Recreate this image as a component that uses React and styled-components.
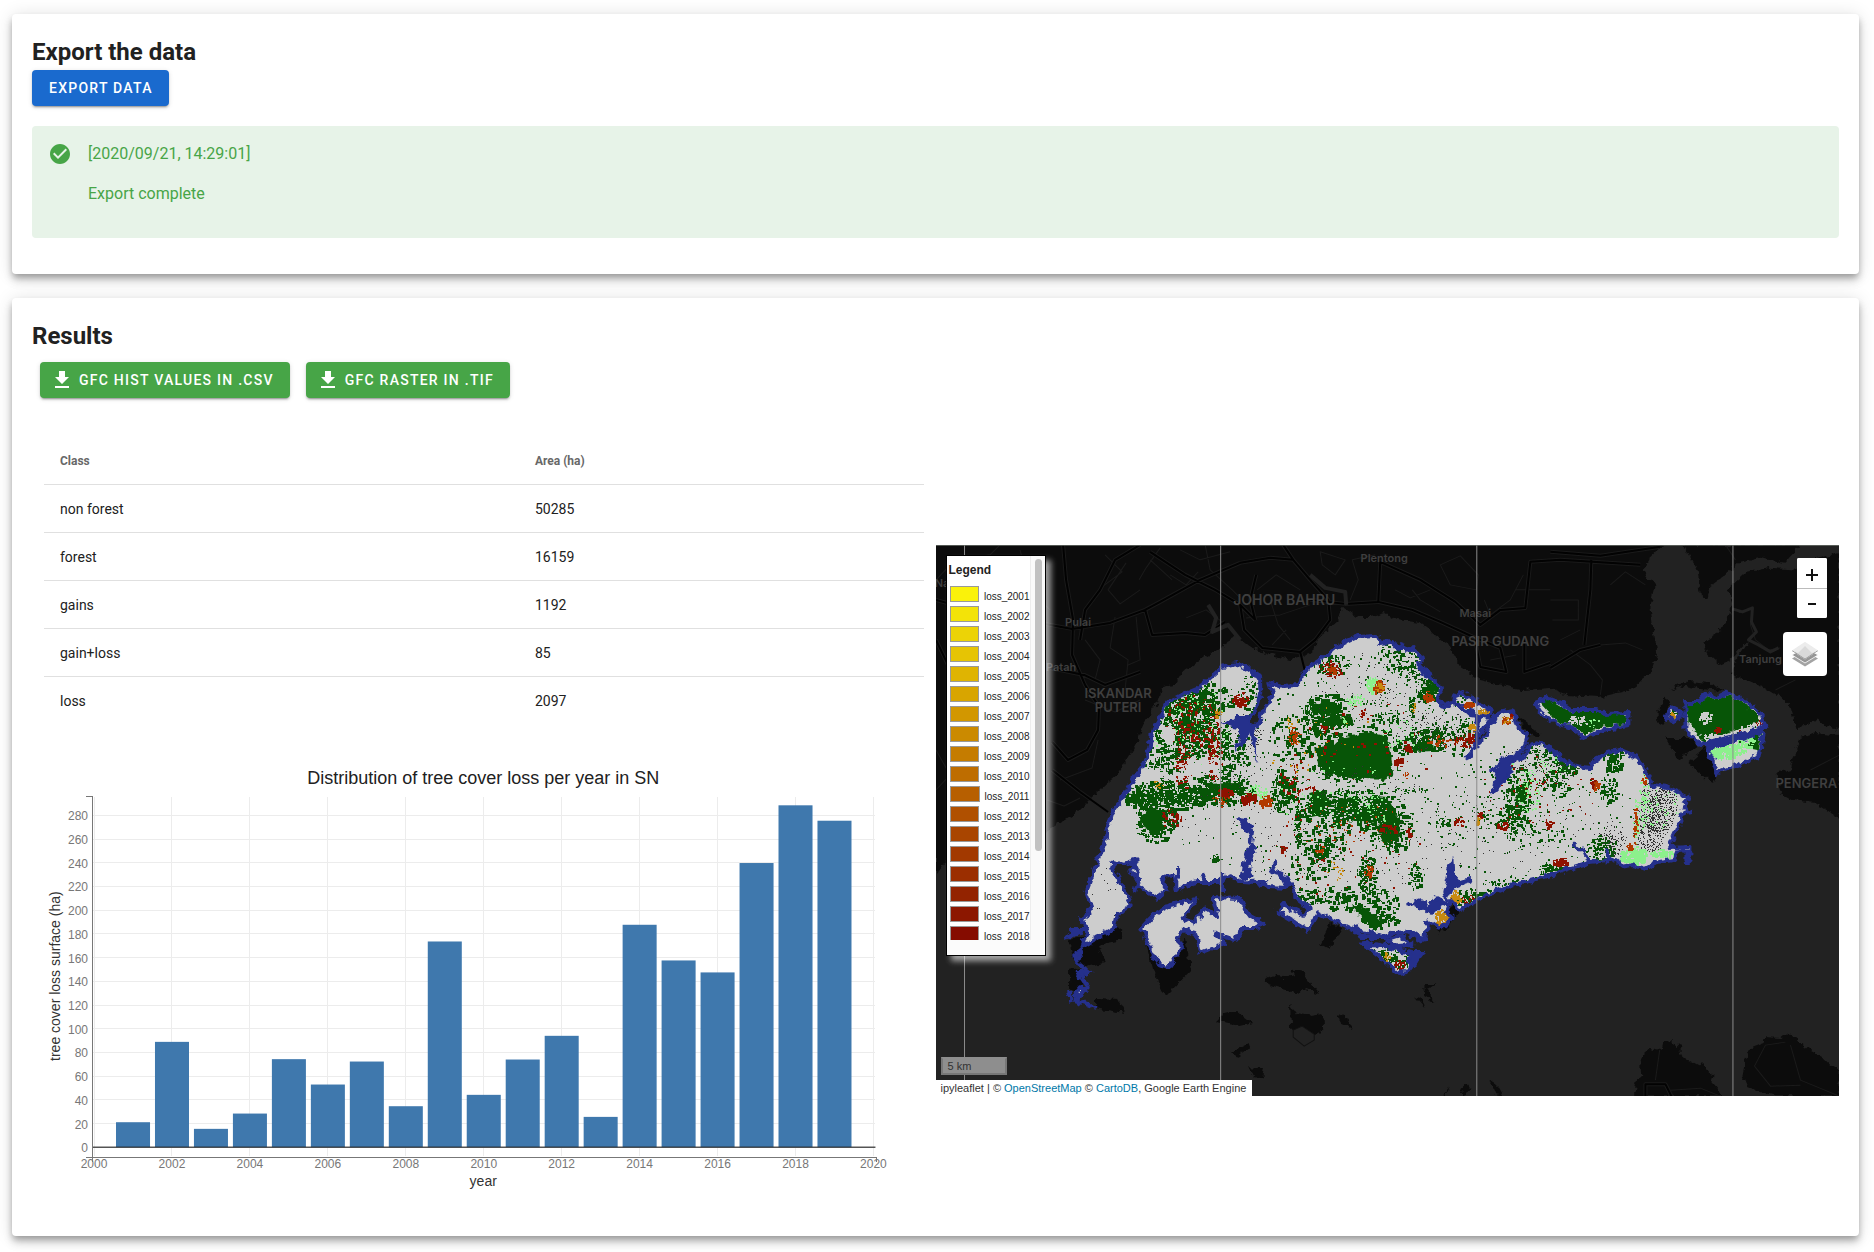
import React from 'react';
import styled, { createGlobalStyle } from 'styled-components';

const GlobalStyle = createGlobalStyle`
  *, *::before, *::after { box-sizing: border-box; }
  body {
    margin: 0;
    background: #fff;
    color: #212121;
    font-family: Roboto, "Liberation Sans", sans-serif;
    font-size: 16px;
    line-height: 24px;
  }
`;

const Page = styled.main`
  display: flex;
  flex-direction: column;
  gap: 24px;
  padding: 14px 15px 16px 12px;
`;

const Card = styled.section`
  padding: 20px;
  padding-bottom: ${(p) => (p.$roomy ? '36px' : '20px')};
  border-radius: 4px;
  background: #fff;
  box-shadow: 0 4px 6px -1px rgba(0, 0, 0, 0.26), 0 7px 10px 0 rgba(0, 0, 0, 0.14),
    0 1px 18px 0 rgba(0, 0, 0, 0.12);
`;

const Heading = styled.h2`
  margin: 0;
  font-size: 24px;
  line-height: 36px;
  font-weight: 700;
`;

const Button = styled.button`
  display: inline-flex;
  align-items: center;
  gap: 5px;
  height: 36px;
  padding: 0 16px 0 ${(p) => (p.$icon ? '10px' : '17px')};
  border: 0;
  border-radius: 4px;
  background: ${(p) => (p.$tone === 'primary' ? '#1a6ace' : '#47a547')};
  color: #fff;
  font: 500 14px/36px Roboto, "Liberation Sans", sans-serif;
  letter-spacing: 1.25px;
  text-transform: uppercase;
  white-space: nowrap;
  cursor: pointer;
  box-shadow: 0 3px 1px -2px rgba(0, 0, 0, 0.2), 0 2px 2px 0 rgba(0, 0, 0, 0.14),
    0 1px 5px 0 rgba(0, 0, 0, 0.12);
`;

const ButtonRow = styled.div`
  display: flex;
  flex-wrap: wrap;
  gap: 16px;
  margin: 8px 8px 27px;
`;

const Icon = styled.svg`
  flex: none;
  width: 24px;
  height: 24px;
  fill: currentColor;
`;

const Alert = styled.div`
  display: flex;
  gap: 16px;
  margin-top: 20px;
  padding: 16px;
  border-radius: 4px;
  background: #e7f3e8;
  color: #47a547;
`;

const AlertText = styled.p`
  margin: 0 0 16px;
`;

const Columns = styled.div`
  display: grid;
  grid-template-columns: minmax(0, 1fr) minmax(0, 1fr);
  align-items: center;
`;

const Summary = styled.div`
  display: flex;
  flex-direction: column;
  padding: 12px 0;
`;

const TableWrap = styled.div`
  padding: 0 12px;
`;

const Table = styled.table`
  width: 100%;
  table-layout: fixed;
  border-collapse: separate;
  border-spacing: 0;
  font-size: 14px;

  th, td {
    height: 48px;
    padding: 0 16px;
    text-align: left;
    border-bottom: 1px solid #e0e0e0;
  }
  th {
    font-size: 12px;
    font-weight: 700;
    color: #686868;
  }
  th:first-child { width: 54%; }
  tr:last-child td { border-bottom: 0; }
`;

const Chart = styled.svg`
  display: block;
  width: 100%;
  height: auto;
  font-family: "Liberation Sans", Arial, sans-serif;
`;

const MapFrame = styled.div`
  position: relative;
  height: 551px;
  overflow: hidden;
  background: #222;
  font-family: "Liberation Sans", Arial, sans-serif;
`;

const MapDrawing = styled.svg`
  display: block;
  width: 100%;
  height: 100%;
`;

const Legend = styled.aside`
  position: absolute;
  top: 10px;
  left: 10px;
  display: flex;
  width: 100px;
  height: 401px;
  padding-bottom: 15px;
  border: 1px solid #000;
  background: #fbfbfb;
  box-shadow: 5px 5px 6px rgba(255, 255, 255, 0.6);
  color: #222;
`;

const LegendBody = styled.div`
  flex: 1;
  overflow: hidden;
  background: #fff;
`;

const LegendTitle = styled.h3`
  margin: 5px 2px 5px;
  font-size: 12px;
  line-height: 18px;
  font-weight: 700;
`;

const LegendList = styled.ul`
  margin: 0;
  padding: 0 0 0 3px;
  list-style: none;
`;

const LegendItem = styled.li`
  display: flex;
  align-items: flex-end;
  gap: 5px;
  height: 20px;
  font-size: 10px;
  line-height: 14px;
  white-space: nowrap;
`;

const Swatch = styled.span`
  align-self: center;
  width: 30px;
  height: 16px;
  border: 1px solid #999;
  background: ${(p) => p.$color};
`;

const ScrollTrack = styled.div`
  width: 15px;
  padding: 3px 3px 0 4px;
  border-left: 1px solid #ededed;
  background: #fafafa;
`;

const ScrollThumb = styled.div`
  height: 292px;
  border-radius: 4px;
  background: #c1c1c1;
`;

const Controls = styled.div`
  position: absolute;
  top: 13px;
  right: 12px;
  display: flex;
  flex-direction: column;
  align-items: flex-end;
  gap: 14px;
`;

const ZoomGroup = styled.div`
  display: flex;
  flex-direction: column;
  overflow: hidden;
  border-radius: 2px;
  background: #fff;
`;

const MapButton = styled.button`
  display: flex;
  align-items: center;
  justify-content: center;
  width: ${(p) => p.$size};
  height: ${(p) => p.$size};
  padding: 0;
  border: 0;
  border-radius: ${(p) => (p.$round ? '4px' : '0')};
  background: #fff;
  color: #111;
  cursor: pointer;

  & + & { border-top: 1px solid #bbb; }
`;

const ScaleBar = styled.div`
  position: absolute;
  left: 5px;
  bottom: 21px;
  width: 66px;
  height: 18px;
  padding-left: 5px;
  border: 2px solid #777;
  border-top-color: #8e8e8e;
  background: #8e8e8e;
  color: #333;
  font-size: 11px;
  line-height: 14px;
`;

const Attribution = styled.div`
  position: absolute;
  left: 0;
  bottom: 0;
  padding: 0 6px 0 5px;
  background: #fff;
  color: #333;
  font-size: 11px;
  line-height: 16px;

  a { color: #0078a8; text-decoration: none; }
`;

const areas = [
  ['non forest', 50285],
  ['forest', 16159],
  ['gains', 1192],
  ['gain+loss', 85],
  ['loss', 2097],
];

const lossByYear = [
  21.1, 88.9, 15.5, 28.4, 74.3, 52.9, 72.3, 34.6, 173.6, 44.2, 74, 94, 25.6, 187.7, 157.6, 147.5,
  239.8, 288.5, 275.5,
];

const yearX = (year) => 62 + (year - 2000) * 38.95;
const areaY = (value) => 422 - value * 1.1845;

function LossChart() {
  const years = Array.from({ length: 11 }, (_, i) => 2000 + i * 2);
  const ticks = Array.from({ length: 15 }, (_, i) => i * 20);
  return (
    <Chart viewBox="0 0 903 479" role="img" aria-label="Distribution of tree cover loss per year in SN">
      <text x="451" y="59" fontSize="18" textAnchor="middle" fill="#212121">
        Distribution of tree cover loss per year in SN
      </text>
      <g stroke="#ececec" shapeRendering="crispEdges">
        {ticks.map((v) => (
          <line key={v} x1="60" x2="843" y1={areaY(v)} y2={areaY(v)} />
        ))}
        {years.map((y) => (
          <line key={y} x1={yearX(y)} x2={yearX(y)} y1="72" y2="431" />
        ))}
      </g>
      <g fill="#3f78ad">
        {lossByYear.map((v, i) => (
          <rect key={i} x={yearX(2001 + i) - 17} y={areaY(v)} width="34" height={v * 1.1845} />
        ))}
      </g>
      <path d="M60 422H843" stroke="#222" strokeOpacity="0.75" strokeWidth="1.5" />
      <g fill="none" stroke="#777" shapeRendering="crispEdges">
        <path d="M54 71.5H60.500V437" />
        <path d="M54 432H844.500V437" />
      </g>
      <g fontSize="12" fill="#777">
        {ticks.map((v) => (
          <text key={v} x="56" y={areaY(v) + 5} textAnchor="end">{v}</text>
        ))}
        {years.map((y) => (
          <text key={y} x={yearX(y)} y="443" textAnchor="middle">{y}</text>
        ))}
      </g>
      <g fontSize="14" fill="#333" textAnchor="middle">
        <text x="451" y="461">year</text>
        <text transform="translate(28 251) rotate(-90)">tree cover loss surface (ha)</text>
      </g>
    </Chart>
  );
}

const mainland = [
  'M936 545H1663L1650 557L1643 570L1655 587L1650 607L1653 630L1657 653L1650 673L1630 690L1600 697L1567 695L1550 688L1523 690L1480 680L1460 667L1447 643L1420 623L1397 620L1385 613L1370 617L1357 617L1343 607L1340 618L1323 633L1315 648L1307 655L1290 660L1268 654L1250 647L1236 636L1228 640L1222 648L1202 658L1183 672L1176 684L1163 687L1158 702L1143 725L1135 745L1117 775L1105 785L1080 810L1063 820L1040 835L1000 845L960 850L945 862L936 874Z',
  'M1683 545L1697 570L1701 598L1707 598L1711 585L1725 575L1740 562L1760 557L1783 563L1800 545Z',
  'M1839 552L1815 560L1795 570L1770 568L1745 573L1727 590L1732 603L1728 618L1717 633L1702 643L1708 655L1719 665L1730 660L1738 650L1748 640L1739 655L1730 673L1763 687L1780 697L1790 707L1796 727L1805 726L1817 718L1826 727L1839 730Z',
  'M1839 735L1815 732L1800 738L1794 755L1790 770L1775 774L1780 793L1793 800L1815 803L1839 818Z',
  'M1633 1096L1637 1078L1642 1075L1640 1057L1650 1048L1661 1050L1663 1042L1672 1041L1675 1048L1679 1044L1682 1058L1690 1061L1697 1065L1703 1064L1708 1073L1713 1075L1711 1082L1723 1096Z',
  'M1747 1087L1742 1075L1745 1060L1750 1048L1763 1043L1764 1037L1780 1038L1787 1032L1797 1040L1810 1050L1823 1057L1830 1064L1839 1070V1096H1775L1762 1092Z',
];

const islets = [
  'M1264 980Q1270 972 1286 978L1295 975L1293 971Q1302 969 1308 980L1319 994L1305 989L1300 993Q1285 990 1264 983Z',
  'M1290 1005L1296 1013L1310 1016L1322 1014L1323 1030L1312 1036L1302 1027L1291 1030Z',
  'M1338 1014L1346 1018L1353 1029L1341 1024Z',
  'M1216 1022L1224 1014L1237 1011L1253 1023L1240 1026Z',
  'M1231 1052L1248 1043L1250 1048L1236 1058Z',
  'M1248 1067L1264 1068L1262 1078L1255 1077Z',
  'M1414 996L1420 998L1426 1009ZM1424 984L1435 984L1427 990L1435 1003L1425 997ZM1438 993L1442 998Z',
  'M1489 1079L1498 1086L1503 1095L1495 1094ZM1460 1090L1467 1083L1471 1089L1462 1094ZM1443 1096L1450 1086L1445 1096Z',
  'M1096 998L1117 999L1124 1013L1096 1008Z',
  'M1068 940L1122 928V940L1098 945L1105 963L1069 970V990L1078 995L1085 975L1074 960Z',
  'M1146 945L1185 940L1191 970L1165 997L1153 972Z',
  'M1331 923L1341 928L1329 949L1320 944Z',
  'M1688 763L1706 748L1718 772L1712 784Z',
  'M1656 712L1666 697L1669 706L1663 725L1657 722ZM1667 690L1688 681L1708 683L1725 691L1700 689L1685 686Z',
  'M1665 738L1693 738L1697 746L1678 760ZM1516 715L1541 735L1536 737L1527 734Z',
  'M1208 875H1224V883H1206ZM1430 920L1475 893L1460 912L1440 934Z',
];

const roadsWide =
  'M1063 545L1066 580L1073 620L1072 655L1085 685L1099 707L1098 730L1087 750L1068 760L1052 742M1140 545L1115 560L1100 590L1085 610L1080 640M936 600L990 615L1045 624L1072 629L1110 623L1145 610L1160 602L1200 580L1240 563M1145 610L1152 635L1185 633L1205 635L1225 622M1150 552L1185 575L1215 590L1240 605L1255 620M1240 563L1270 558L1293 560L1310 580L1328 600L1330 620L1315 640L1300 652L1262 648L1244 630L1240 605M1293 560L1283 545M1255 620L1250 600L1256 575M1300 652L1305 672L1307 682M1310 600L1345 604L1378 602L1412 610L1440 622L1475 638L1500 648L1506 672L1480 667L1475 640M1378 602L1380 562M1380 562L1420 580L1455 602L1480 625L1500 610L1525 608L1530 562L1560 560L1640 565M1591 560L1590 590L1584 645M1550 668L1580 650L1600 645M1524 640V672L1550 663M1550 552L1600 556L1660 547M1050 668L1084 675L1105 685L1140 672M1052 770L1080 792L1108 812M936 640L960 690L980 730M1645 1096V1084H1665L1671 1096';
const roadsThin =
  'M1105 555L1122 572L1098 590M1126 563L1108 590L1120 604L1140 590M1150 560L1172 580M1160 548L1146 568L1139 580M1170 575L1186 585L1198 572M1205 545L1210 570L1232 590L1240 598M1186 618L1206 610L1222 622M936 580L955 560L990 555L1000 545M1020 550L1030 590L1050 610M1085 640L1100 660L1095 680M1115 617L1110 648L1128 660L1125 690M1136 617L1140 660L1128 665M1085 700L1115 712L1140 700M1060 780L1092 768L1098 740M1047 800L1064 806L1080 798M1180 550L1200 560L1230 552M1257 590L1276 575L1300 590M1270 600L1278 625L1290 640M1246 618L1280 615L1310 605M1286 630L1272 645M1320 552L1345 560L1335 575L1322 565ZM1350 600L1358 580L1352 560L1375 555M1395 590L1410 598L1430 590M1412 590L1420 600L1440 612M1440 565L1460 556L1478 575L1476 590L1450 585ZM1484 600L1490 615L1510 600L1523 575M1515 590L1550 590M1490 660L1516 655M1550 600H1578V620H1552M1560 640L1580 630M1600 645L1625 643L1642 650M1570 650L1590 665L1602 680L1600 695M1610 585L1625 572L1645 585M1738 613L1752 608L1750 625L1755 640M1755 640L1768 650L1780 648M1775 690L1795 680M1725 545L1735 560M1755 790L1752 775L1760 755L1763 720M1735 808L1760 829L1764 822L1755 810M1690 785L1735 820M936 790L950 775L936 750M1185 905L1170 980M1754 1066L1765 1045L1785 1042M1790 1045L1800 1080L1839 1096M1754 1066L1770 1086L1800 1085M1660 1045L1655 1080M1670 1090L1700 1088L1720 1096M1810 770L1839 755M1140 945L1172 985';

const island =
  'M1112 813L1123 797L1133 780L1143 765L1149 750L1152 732L1160 718L1167 703L1180 696L1197 689L1210 678L1222 667L1237 664L1245 667L1260 677V693L1257 707L1248 722L1256 727L1265 707L1273 695L1269 683L1283 686L1297 685L1307 668L1323 658L1340 645L1357 637L1377 636L1380 643L1392 642L1398 650L1410 648L1423 658L1418 668L1427 670L1433 680L1442 688L1437 700L1443 707L1457 703L1470 715L1490 718L1478 737L1475 747L1484 738L1495 715L1503 712L1513 710L1517 725L1527 737L1525 745L1517 758L1505 760L1502 770L1494 790L1507 777L1512 762L1523 757L1530 745L1542 742L1550 750L1557 755L1570 765L1590 768L1593 762L1607 752L1620 750L1637 757L1645 770L1652 785L1667 787L1688 797L1683 808L1692 812L1683 813L1675 832L1668 848L1690 847V862H1686V851L1677 852L1674 860L1657 862L1645 869L1632 865L1620 867L1618 859L1590 862L1570 868L1550 875L1507 887L1487 895L1473 902L1460 910L1450 900L1446 912L1453 917L1440 928L1427 920L1425 940L1413 932L1393 933L1387 937L1370 933L1357 932L1343 925L1318 913L1308 930L1278 912L1283 905L1303 915L1310 908L1295 897V888L1287 880L1280 873L1287 888L1268 887L1263 883L1240 882L1230 876L1220 882H1197L1190 884L1177 890L1173 875L1160 878L1167 890L1157 898L1137 885L1140 878L1130 872L1137 860L1123 865L1113 862L1112 868L1123 887L1132 905L1117 915L1115 927L1090 942L1082 947L1087 933L1083 920L1092 907L1086 892L1093 873L1103 847Z';

const isles = [
  'M1142 927L1153 915L1170 905L1197 899L1182 918L1193 923L1205 908L1218 918L1212 897L1240 898L1248 915L1263 923L1255 928L1243 928L1235 940L1213 933L1225 943L1200 953L1195 933L1183 930L1177 937L1182 947L1168 968L1160 965L1147 943Z',
  'M1362 943L1380 945L1397 950L1411 953L1422 953L1407 972L1398 973L1383 960Z',
  'M1388 940L1400 936L1412 945L1397 946Z',
  'M1453 697L1463 693L1478 702L1491 712L1487 717L1470 712L1457 705Z',
  'M1535 703L1547 698L1560 703L1570 710L1597 710L1605 714L1628 713V725L1603 730L1583 738L1572 728L1553 722L1540 712Z',
  'M1685 703H1698L1705 694L1717 698L1727 693L1747 703L1760 713L1765 725L1750 732L1710 745L1700 745L1697 740L1685 730Z',
  'M1707 749L1763 732L1758 757L1717 773L1713 762Z',
  'M1665 718L1672 708L1682 713L1675 722Z',
  'M1075 955L1079 950L1081 958ZM1076 972L1088 971L1086 975ZM1074 995L1080 988L1086 988L1082 996Z',
];

const inlets =
  'M1478 715L1476 745L1466 758M1522 752L1504 760L1491 770L1506 771L1491 794M1277 860L1271 871L1283 874L1290 886M1470 880L1457 884M1573 843L1584 853L1588 862M1607 848L1608 860M1408 906L1418 899L1428 912L1437 899L1447 905M1178 868L1177 888M1202 872L1205 882M1163 875L1165 885M1133 862L1139 875L1134 893M1095 938L1115 930L1115 922M1083 948L1075 955L1079 964L1090 973L1078 973L1088 987L1075 1000L1097 1008M1068 991L1072 1002M1070 930H1085M1355 925L1360 937L1387 937M1365 945L1395 946L1412 955M1412 951L1408 965M1413 932L1420 940M1405 931L1422 942M1685 845V860M1222 872V893';

const inletFill =
  'M1218 719L1228 722L1236 716L1249 716V738L1243 746L1232 751L1238 742L1239 728L1228 726ZM1247 722L1254 728L1257 763L1252 745ZM1236 818L1247 819L1254 830L1252 842L1256 848L1250 868L1254 876L1240 882L1243 862L1248 846L1249 838ZM1282 684L1272 681L1277 690ZM1268 879L1250 880V884L1268 887ZM1448 868L1453 857L1454 874L1460 882L1470 878L1460 887L1452 890L1446 905L1443 892ZM1396 642L1404 645L1402 653L1396 650ZM1416 659L1425 668L1431 680L1420 674ZM1498 766L1502 755L1512 760L1510 770L1500 780L1492 796L1494 780ZM1413 905L1420 897L1428 906L1434 897L1443 903L1432 915ZM1062 940L1072 928L1088 930L1072 938ZM1068 936L1074 930L1070 940ZM1082 918L1076 917L1083 926ZM1413 950H1424L1416 965L1408 968ZM1360 943L1372 940L1368 949ZM1700 742L1764 727L1762 734L1712 750Z';

const forest =
  'M1315 748L1333 745L1340 738L1370 732L1388 737L1390 757L1393 775L1383 780L1350 778L1325 775L1318 765ZM1312 705L1325 701L1338 706L1340 712L1325 716L1312 713ZM1312 720L1330 716L1352 717L1354 724L1330 733L1315 738ZM1307 792L1322 790L1330 800L1330 813L1310 817ZM1333 800L1365 795L1387 797L1395 812L1401 825L1380 822L1340 820ZM1378 823L1396 822L1402 835L1390 843L1380 838ZM1126 797L1140 787L1152 792L1160 787L1168 797L1150 808ZM1138 818L1152 808L1168 813L1160 830L1148 832ZM1205 783L1235 782L1245 789L1225 793ZM1178 720L1196 722L1206 730L1190 738ZM1413 745L1432 740L1434 750L1412 751ZM1350 905L1366 908L1385 923L1375 930ZM1425 683L1438 682L1437 692ZM1538 701L1548 699L1570 712L1597 711L1627 716L1625 724L1600 727L1585 735L1572 726L1555 720ZM1686 704H1698L1706 696L1717 700L1727 695L1746 705L1759 716L1758 722L1735 730L1703 742L1697 735L1688 722ZM1748 737L1760 735L1757 750L1747 748ZM1514 800L1524 782L1530 782L1524 803Z';

// Each patch is [cx, cy, rx, ry, count, largest cell].
const speckles = [
  ['#075507', [
    [1185, 725, 32, 36, 560, 4], [1165, 795, 44, 16, 420, 4], [1155, 822, 22, 20, 230, 4],
    [1200, 700, 34, 18, 190, 4], [1208, 790, 48, 15, 340, 4], [1232, 755, 18, 35, 120, 3],
    [1160, 760, 18, 18, 90, 4], [1223, 750, 8, 30, 70, 4],
    [1325, 715, 24, 24, 190, 5], [1355, 755, 50, 34, 260, 4], [1350, 808, 55, 22, 380, 4],
    [1390, 830, 24, 22, 130, 4], [1290, 738, 22, 24, 100, 4], [1320, 842, 26, 18, 110, 4],
    [1367, 872, 10, 22, 130, 3], [1345, 898, 58, 12, 190, 4], [1380, 915, 20, 12, 90, 4],
    [1310, 870, 24, 22, 60, 4], [1415, 875, 9, 14, 50, 3], [1420, 740, 26, 14, 130, 4],
    [1330, 664, 20, 12, 70, 3], [1395, 655, 18, 18, 60, 3], [1417, 665, 22, 18, 110, 3],
    [1430, 690, 14, 12, 100, 4], [1455, 735, 32, 20, 130, 3], [1283, 790, 14, 24, 150, 4],
    [1297, 825, 3, 22, 70, 3], [1518, 795, 14, 32, 150, 4], [1508, 820, 14, 14, 70, 3],
    [1545, 755, 25, 12, 60, 3], [1385, 718, 16, 8, 36, 3], [1412, 705, 5, 14, 26, 3],
    [1565, 765, 14, 10, 65, 4], [1612, 758, 10, 14, 80, 4], [1608, 788, 10, 14, 70, 3],
    [1600, 850, 14, 16, 110, 3], [1555, 782, 20, 14, 60, 4], [1475, 897, 24, 9, 110, 3],
    [1515, 882, 36, 4, 90, 2], [1555, 868, 18, 6, 90, 3], [1390, 957, 28, 10, 130, 3],
    [1215, 858, 5, 4, 24, 3], [1320, 770, 190, 110, 420, 2], [1520, 820, 120, 60, 260, 2],
    [1370, 705, 90, 50, 130, 2], [1740, 715, 30, 25, 60, 4], [1675, 713, 5, 6, 18, 3],
    [1464, 702, 10, 8, 20, 2], [1485, 815, 6, 4, 10, 3], [1445, 822, 12, 5, 22, 3],
    [1535, 835, 30, 12, 40, 3], [1410, 790, 18, 4, 22, 2], [1250, 700, 12, 26, 60, 3],
  ]],
  ['#333', [
    [1659, 800, 18, 34, 520, 1], [1650, 825, 18, 28, 400, 1], [1435, 730, 40, 20, 130, 1],
    [1380, 690, 70, 40, 130, 1], [1540, 765, 40, 20, 170, 1], [1340, 860, 90, 50, 150, 1],
    [1230, 780, 90, 60, 170, 1], [1500, 830, 110, 45, 120, 1], [1250, 730, 14, 22, 90, 1],
    [1612, 838, 14, 18, 110, 1], [1110, 890, 18, 30, 14, 1], [1365, 785, 60, 20, 60, 1],
  ]],
  ['#8cf08c', [
    [1372, 684, 7, 8, 70, 3], [1354, 700, 9, 7, 55, 2], [1345, 722, 4, 12, 14, 2],
    [1725, 750, 16, 8, 190, 3], [1743, 742, 10, 10, 80, 3], [1712, 753, 6, 6, 60, 3],
    [1633, 855, 14, 8, 150, 4], [1662, 853, 12, 4, 70, 3], [1644, 800, 5, 30, 70, 2],
    [1660, 800, 20, 30, 50, 2], [1636, 822, 3, 25, 50, 2], [1508, 766, 6, 5, 26, 3],
    [1528, 790, 12, 22, 75, 2], [1255, 792, 12, 8, 60, 2], [1190, 725, 40, 42, 110, 2],
    [1345, 800, 70, 40, 90, 2], [1370, 800, 12, 12, 30, 2], [1131, 908, 8, 2, 10, 2],
    [1400, 735, 20, 15, 30, 2], [1550, 765, 20, 10, 25, 2], [1590, 722, 20, 5, 14, 2],
  ]],
  ['#8e1200', [
    [1192, 730, 28, 36, 160, 3], [1240, 699, 8, 7, 55, 3], [1224, 792, 7, 5, 55, 4],
    [1248, 798, 7, 6, 55, 4], [1215, 755, 8, 28, 70, 3], [1182, 765, 8, 26, 60, 3],
    [1398, 761, 4, 4, 20, 4], [1330, 668, 12, 9, 40, 3], [1170, 818, 12, 10, 32, 3],
    [1365, 745, 70, 45, 50, 3], [1408, 747, 4, 4, 14, 4], [1465, 740, 14, 8, 44, 3],
    [1387, 828, 10, 5, 26, 3], [1408, 832, 3, 4, 14, 4], [1282, 848, 3, 3, 12, 3],
    [1458, 822, 5, 5, 20, 3], [1512, 714, 3, 6, 18, 3], [1560, 862, 8, 4, 35, 4],
    [1548, 823, 4, 4, 18, 3], [1400, 964, 6, 5, 40, 2], [1479, 815, 3, 3, 12, 3],
    [1340, 850, 80, 50, 80, 2], [1540, 790, 60, 40, 70, 2], [1717, 730, 3, 3, 18, 3],
    [1742, 732, 5, 3, 30, 2], [1760, 722, 4, 5, 16, 2], [1470, 900, 14, 5, 36, 2],
    [1293, 778, 16, 24, 42, 3], [1502, 825, 6, 4, 20, 3], [1592, 782, 3, 5, 16, 4],
    [1311, 787, 3, 3, 10, 4], [1323, 727, 4, 5, 16, 3], [1362, 713, 4, 5, 18, 2],
  ]],
  ['#b13a00', [
    [1293, 736, 6, 10, 34, 3], [1265, 800, 6, 6, 34, 4], [1378, 686, 5, 7, 40, 4],
    [1427, 696, 5, 5, 32, 4], [1331, 668, 5, 6, 16, 4], [1440, 740, 16, 6, 26, 3],
    [1368, 870, 4, 7, 24, 3], [1220, 800, 12, 6, 24, 2], [1467, 704, 5, 3, 30, 3],
    [1629, 846, 3, 3, 20, 3], [1635, 827, 2, 22, 50, 2], [1595, 785, 3, 4, 12, 4],
    [1506, 720, 6, 4, 22, 3], [1345, 825, 60, 24, 40, 2], [1643, 778, 3, 4, 14, 3],
    [1319, 850, 5, 5, 16, 3], [1405, 775, 4, 4, 10, 2],
  ]],
  ['#c78a10', [
    [1441, 917, 7, 8, 120, 3], [1455, 897, 5, 7, 50, 3], [1483, 711, 7, 4, 50, 3],
    [1472, 727, 5, 4, 22, 3], [1379, 687, 4, 5, 18, 3], [1386, 957, 4, 6, 22, 2],
    [1217, 713, 3, 4, 14, 3], [1157, 785, 5, 6, 14, 2], [1289, 722, 2, 6, 12, 2],
    [1413, 708, 3, 7, 14, 2], [1671, 716, 3, 4, 30, 3], [1477, 820, 2, 5, 12, 3],
    [1335, 870, 10, 12, 16, 2], [1505, 720, 5, 4, 12, 2], [1320, 740, 60, 40, 24, 2],
  ]],
  ['#cdcdcd', [
    [1705, 717, 6, 6, 40, 3], [1712, 737, 10, 4, 50, 3], [1750, 727, 12, 4, 40, 3],
    [1167, 733, 6, 9, 80, 4], [1150, 772, 14, 5, 90, 4], [1190, 770, 7, 15, 90, 4],
    [1217, 765, 4, 18, 60, 3], [1577, 720, 12, 5, 46, 3], [1590, 735, 6, 3, 24, 3],
    [1345, 728, 22, 3, 60, 3], [1345, 785, 36, 4, 120, 4], [1735, 768, 24, 5, 90, 4],
    [1318, 782, 12, 3, 40, 4], [1365, 800, 8, 6, 34, 2], [1160, 795, 36, 14, 60, 2],
    [1345, 808, 46, 14, 60, 2], [1320, 725, 14, 16, 24, 2],
  ]],
];

let seed = 20200921;
const random = () => {
  seed = (seed * 1664525 + 1013904223) % 4294967296;
  return seed / 4294967296;
};

const specklePaths = speckles.map(([color, patches]) => {
  let d = '';
  patches.forEach(([cx, cy, rx, ry, count, cell]) => {
    for (let i = 0; i < count; i += 1) {
      const angle = random() * Math.PI * 2;
      const radius = Math.pow(random(), 0.65);
      const w = 1 + Math.floor(random() * cell);
      const h = 1 + Math.floor(random() * cell);
      const x = Math.round(cx + Math.cos(angle) * rx * radius);
      const y = Math.round(cy + Math.sin(angle) * ry * radius);
      d += `M${x} ${y}h${w}v${h}h-${w}z`;
    }
  });
  return { color, d };
});

const places = [
  ['Plentong', 1384, 562, 11], ['JOHOR BAHRU', 1284, 605, 14], ['Pulai', 1078, 626, 11],
  ['Patah', 1061, 671, 11], ['Na', 942, 587, 11], ['ISKANDAR', 1118, 698, 13], ['PUTERI', 1118, 712, 13],
  ['Masai', 1475, 617, 11], ['PASIR GUDANG', 1500, 646, 13], ['Tanjung', 1760, 663, 11],
];

function TreeCoverMap() {
  return (
    <MapDrawing viewBox="936 545 903 551" preserveAspectRatio="xMidYMid slice" role="img" aria-label="Tree cover map of Singapore">
      <defs>
        <clipPath id="land">
          <path d={island} />
          {isles.map((d) => <path key={d} d={d} />)}
        </clipPath>
        <clipPath id="coast">
          {mainland.map((d) => <path key={d} d={d} />)}
        </clipPath>
        <filter id="ragged" filterUnits="userSpaceOnUse" x="936" y="545" width="903" height="551" colorInterpolationFilters="sRGB">
          <feTurbulence type="fractalNoise" baseFrequency="0.16" numOctaves="2" seed="7" result="noise" />
          <feDisplacementMap in="SourceGraphic" in2="noise" scale="8" xChannelSelector="R" yChannelSelector="G" />
        </filter>
      </defs>
      <rect x="936" y="545" width="903" height="551" fill="#222" />
      <g fill="#0c0c0c" filter="url(#ragged)">
        <g>{mainland.map((d) => <path key={d} d={d} />)}</g>
        {islets.map((d) => <path key={d} d={d} />)}
      </g>
      <path d="M936 545H1663L1655 552H940V850H936Z" fill="#0c0c0c" />
      <g fill="none" strokeLinejoin="round">
        <g clipPath="url(#coast)">
          <path d={roadsThin} stroke="#1b1b1b" strokeWidth="1" />
          <path d={roadsWide} stroke="#1a1a1a" strokeWidth="4" />
        </g>
        <path d={roadsWide} stroke="#020202" strokeWidth="2" />
        <path d="M1208 605L1216 618L1212 632L1228 625L1240 640M1310 575L1325 588L1345 592L1346 605" stroke="#222" strokeWidth="4" />
        <path d="M1732 609L1742 612L1752 608L1751 622L1756 632L1748 640L1758 645L1770 652L1778 648" stroke="#222" strokeWidth="3" />
        <path d="M1293 1030L1302 1026L1314 1034V1040L1304 1046L1293 1037Z" fill="#222" stroke="#111" />
      </g>
      <g fill="#3f3f3f" fontFamily="Inter, 'Liberation Sans', sans-serif" fontWeight="600" textAnchor="middle">
        {places.map(([name, x, y, size]) => (
          <text key={name} x={x} y={y} fontSize={size}>{name}</text>
        ))}
        <text x="1775" y="788" fontSize="13" textAnchor="start">PENGERA</text>
      </g>
      <g filter="url(#ragged)">
        <g fill="#cdcdcd">
          <path d={island} />
          {isles.map((d) => <path key={d} d={d} />)}
        </g>
        <path d={forest} fill="#075507" />
      </g>
      <g clipPath="url(#land)" shapeRendering="crispEdges">
        {specklePaths.map((s) => <path key={s.color} d={s.d} fill={s.color} />)}
      </g>
      <g fill="none" stroke="#25308c" strokeWidth="4" strokeLinejoin="bevel" filter="url(#ragged)">
        <path d={island} />
        {isles.map((d) => <path key={d} d={d} />)}
        <path d={inlets} />
        <path d={inletFill} fill="#25308c" stroke="none" />
      </g>
      <path d="M964.500 545V1096M1220.500 545V1096M1476.500 545V1096M1732.500 545V1096" stroke="#8c8c8c" />
      <path d="M936 545.500H1839" stroke="#6a716a" />
    </MapDrawing>
  );
}

const lossStops = [[2001, 250, 242, 10], [2006, 216, 165, 0], [2009, 197, 124, 0], [2012, 176, 80, 0], [2018, 133, 12, 0]];

function lossColor(year) {
  const i = Math.max(1, lossStops.findIndex((s) => s[0] >= year));
  const [a, b] = [lossStops[i - 1], lossStops[i]];
  const t = (year - a[0]) / (b[0] - a[0]);
  const mix = [1, 2, 3].map((k) => Math.round(a[k] + (b[k] - a[k]) * t));
  return `rgb(${mix.join(',')})`;
}

const lossYears = Array.from({ length: 18 }, (_, i) => 2001 + i);

function DownloadIcon() {
  return (
    <Icon viewBox="0 0 24 24" aria-hidden="true">
      <path d="M5 20H19V18H5M19 9H15V3H9V9H5L12 16L19 9Z" />
    </Icon>
  );
}

export default function App() {
  return (
    <Page>
      <GlobalStyle />
      <Card $roomy>
        <Heading>Export the data</Heading>
        <Button type="button" $tone="primary">Export data</Button>
        <Alert role="status">
          <Icon viewBox="0 0 24 24" aria-hidden="true">
            <path d="M12 2C6.500 2 2 6.500 2 12S6.500 22 12 22 22 17.500 22 12 17.500 2 12 2M10 17L5 12L6.410 10.590L10 14.170L17.590 6.580L19 8L10 17Z" />
          </Icon>
          <div>
            <AlertText>[2020/09/21, 14:29:01]</AlertText>
            <AlertText>Export complete</AlertText>
          </div>
        </Alert>
      </Card>

      <Card>
        <Heading>Results</Heading>
        <ButtonRow>
          <Button type="button" $icon><DownloadIcon />GFC hist values in .csv</Button>
          <Button type="button" $icon><DownloadIcon />GFC raster in .tif</Button>
        </ButtonRow>
        <Columns>
          <Summary>
            <TableWrap>
              <Table>
                <thead>
                  <tr><th scope="col">Class</th><th scope="col">Area (ha)</th></tr>
                </thead>
                <tbody>
                  {areas.map(([name, area]) => (
                    <tr key={name}><td>{name}</td><td>{area}</td></tr>
                  ))}
                </tbody>
              </Table>
            </TableWrap>
            <LossChart />
          </Summary>
          <MapFrame>
            <TreeCoverMap />
            <Legend>
              <LegendBody>
                <LegendTitle>Legend</LegendTitle>
                <LegendList>
                  {lossYears.map((year) => (
                    <LegendItem key={year}><Swatch $color={lossColor(year)} />{`loss_${year}`}</LegendItem>
                  ))}
                </LegendList>
              </LegendBody>
              <ScrollTrack><ScrollThumb /></ScrollTrack>
            </Legend>
            <Controls>
              <ZoomGroup>
                <MapButton type="button" $size="30px" aria-label="Zoom in">
                  <svg width="12" height="16" viewBox="0 0 12 16"><path d="M6 4V16M0 10H12" stroke="currentColor" strokeWidth="2" /></svg>
                </MapButton>
                <MapButton type="button" $size="30px" aria-label="Zoom out">
                  <svg width="12" height="16" viewBox="0 0 12 16"><path d="M2 8H10" stroke="currentColor" strokeWidth="2" /></svg>
                </MapButton>
              </ZoomGroup>
              <MapButton type="button" $size="44px" $round aria-label="Layers">
                <svg width="26" height="26" viewBox="0 0 26 26">
                  <path d="M0 17.500L13 25.500L26 17.500L13 10Z" fill="#a3a3a3" />
                  <path d="M0 14L13 22L26 14L13 6Z" fill="#969696" stroke="#fff" strokeWidth="0.800" />
                  <path d="M0 9.500L13 18L26 9.500L13 1Z" fill="#d9d9d9" stroke="#fff" strokeWidth="0.800" />
                  <path d="M0 9.500L13 18L26 9.500" fill="none" stroke="#9b9b9b" />
                  <path d="M0 9.500L13 1L26 9.500L20 12L13 5L6 12Z" fill="#ececec" />
                </svg>
              </MapButton>
            </Controls>
            <ScaleBar>5 km</ScaleBar>
            <Attribution>
              ipyleaflet | © <a href="https://www.openstreetmap.org/copyright">OpenStreetMap</a> ©{' '}
              <a href="https://cartodb.com/attributions">CartoDB</a>, Google Earth Engine
            </Attribution>
          </MapFrame>
        </Columns>
      </Card>
    </Page>
  );
}
